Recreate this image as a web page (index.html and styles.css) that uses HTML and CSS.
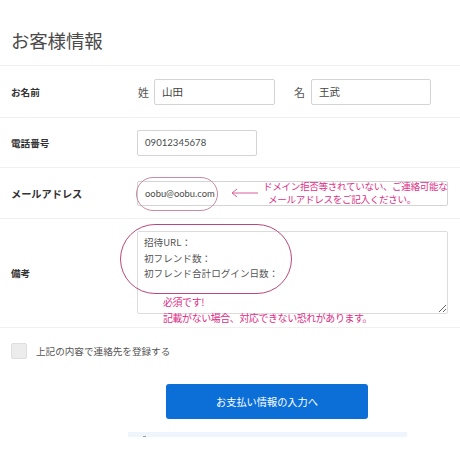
FILE: index.html
```html
<!DOCTYPE html>
<html lang="ja">
<head>
<meta charset="utf-8">
<link rel="stylesheet" href="styles.css">
</head>
<body>
<div class="page">
  <div class="header"><h1 class="title">お客様情報</h1></div>

  <div class="row row-name">
    <div class="label">お名前</div>
    <div class="field">
      <span class="sub">姓</span>
      <div class="inp w121">山田</div>
      <span class="sub sub2">名</span>
      <div class="inp w120">王武</div>
    </div>
  </div>

  <div class="row row-tel">
    <div class="label">電話番号</div>
    <div class="field">
      <div class="inp w120 latin">09012345678</div>
    </div>
  </div>

  <div class="row row-mail">
    <div class="label label-lg">メールアドレス</div>
    <div class="field">
      <div class="inp inp-mail latin">oobu@oobu.com</div>
    </div>
    <div class="ring ring-mail"></div>
    <svg class="arrow" width="28" height="10" viewBox="0 0 28 10">
      <path d="M1 5 H27 M6 1 L1 5 L6 9" fill="none" stroke="#d9609a" stroke-width="1"/>
    </svg>
    <div class="note note-mail">ドメイン拒否等されていない、ご連絡可能な<br><span class="indent">メールアドレスをご記入ください。</span></div>
  </div>

  <div class="row row-note">
    <div class="label">備考</div>
    <div class="field field-top">
      <textarea class="area" readonly>招待URL：
初フレンド数：
初フレンド合計ログイン日数：</textarea>
    </div>
    <div class="ring ring-note"></div>
    <div class="note note-req">必須です!<br>記載がない場合、対応できない恐れがあります。</div>
  </div>

  <div class="check-row">
    <span class="checkbox"></span>
    <span class="check-label">上記の内容で連絡先を登録する</span>
  </div>

  <div class="btn-row">
    <div class="btn">お支払い情報の入力へ</div>
  </div>

  <div class="strip"><span class="dash"></span></div>
</div>
</body>
</html>
```

FILE: styles.css
```css
* { box-sizing: border-box; }
html, body {
  margin: 0;
  padding: 0;
  background: #fff;
}
body {
  font-family: "Noto Sans CJK JP", sans-serif;
  color: #444;
  width: 460px;
  height: 460px;
  overflow: hidden;
}
.page {
  width: 460px;
}
.header {
  height: 66px;
  border-bottom: 1px solid #f0f0f0;
  padding: 27px 0 0 11px;
}
.title {
  margin: 0;
  font-size: 18.5px;
  font-weight: 400;
  line-height: 26px;
  color: #4a4a4a;
  letter-spacing: -0.2px;
}
.row {
  position: relative;
  display: flex;
  align-items: center;
  padding-left: 11px;
  border-bottom: 1px solid #f0f0f0;
}
.row-name { height: 52px; }
.row-tel { height: 50px; }
.row-mail { height: 51px; }
.row-note { height: 109px; }

.label {
  width: 126px;
  flex: none;
  font-size: 9.6px;
  font-weight: 700;
  color: #333;
}
.label-lg { font-size: 10.2px; }
.field {
  display: flex;
  align-items: center;
}
.field-top {
  align-self: flex-start;
  padding-top: 12px;
}
.sub {
  width: 17px;
  font-size: 11px;
  color: #555;
  padding-left: 1px;
}
.sub2 {
  margin-left: 18px;
  width: 18px;
}
.inp {
  height: 26px;
  border: 1px solid #d4d4d4;
  border-radius: 2px;
  padding-left: 7px;
  font-size: 10.5px;
  line-height: 24px;
  color: #444;
  background: #fff;
}
.latin {
  font-family: Lato, "Noto Sans CJK JP", sans-serif;
  font-size: 9.6px;
  color: #4a4a4a;
}
.w120 { width: 120px; }
.w121 { width: 121px; }
.inp-mail {
  width: 311px;
  height: 25px;
  line-height: 23px;
  font-size: 9.4px;
}
.area {
  display: block;
  width: 311px;
  height: 83px;
  margin: 0;
  border: 1px solid #dcdcdc;
  border-radius: 2px;
  padding: 3px 6px;
  font-family: "Noto Sans CJK JP", sans-serif;
  font-size: 9.6px;
  line-height: 15.5px;
  color: #555;
  background: #fff;
  outline: none;
}
.ring {
  position: absolute;
  border: 1px solid #c98aa2;
  border-radius: 20px;
}
.ring-mail {
  left: 136px;
  top: 9px;
  width: 82px;
  height: 34px;
}
.ring-note {
  left: 120px;
  top: 5px;
  width: 172px;
  height: 70px;
  border: 1.6px solid #b9477a;
  border-radius: 36px;
}
.arrow {
  position: absolute;
  left: 231px;
  top: 20px;
}
.note {
  position: absolute;
  color: #dc2f86;
  font-size: 9.6px;
  line-height: 12.5px;
}
.note-mail {
  left: 263px;
  top: 12px;
  letter-spacing: -0.35px;
}
.indent { padding-left: 5px; }
.note-req {
  left: 163px;
  top: 75px;
  font-size: 10px;
  line-height: 15.5px;
  letter-spacing: -0.45px;
}
.check-row {
  display: flex;
  align-items: center;
  padding: 15px 0 0 11px;
  height: 31px;
}
.checkbox {
  width: 16px;
  height: 16px;
  background: #ececec;
  border: 1px solid #dedede;
  border-radius: 2px;
  flex: none;
}
.check-label {
  margin-left: 9px;
  font-size: 9.6px;
  color: #555;
}
.btn-row {
  padding: 25px 0 0 166px;
}
.btn {
  width: 202px;
  height: 35px;
  background: #0b6fd7;
  border-radius: 3px;
  color: #fff;
  font-size: 10.2px;
  line-height: 35px;
  text-align: center;
}
.strip {
  position: relative;
  margin: 13px 0 0 128px;
  width: 279px;
  height: 5px;
  background: #eef5fc;
}
.dash {
  position: absolute;
  left: 15px;
  top: 4px;
  width: 3px;
  height: 1px;
  background: #999;
}
```
